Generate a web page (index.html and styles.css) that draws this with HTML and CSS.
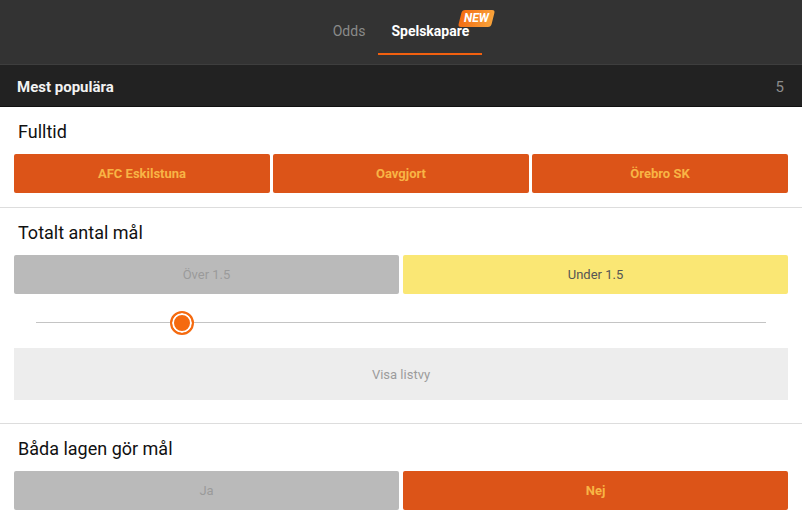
FILE: index.html
```html
<!DOCTYPE html>
<html lang="sv">
<head>
    <meta charset="UTF-8">
    <meta name="viewport" content="width=device-width, initial-scale=1.0">
    <title>Spelskapare</title>
    <link rel="stylesheet" href="styles.css">
</head>
<body>
    <div class="tabs">
        <div class="tab">Odds</div>
        <div class="tab active">Spelskapare<span class="badge-new"><span>NEW</span></span></div>
    </div>
    <div class="group-header">
        <span class="group-title">Mest populära</span>
        <span class="group-count">5</span>
    </div>

    <div class="market">
        <div class="market-title">Fulltid</div>
        <div class="options three">
            <div class="option selected">AFC Eskilstuna</div>
            <div class="option selected">Oavgjort</div>
            <div class="option selected">Örebro SK</div>
        </div>
    </div>

    <div class="market market-goals">
        <div class="market-title">Totalt antal mål</div>
        <div class="options two">
            <div class="option disabled">Över 1.5</div>
            <div class="option highlight">Under 1.5</div>
        </div>
        <div class="slider">
            <div class="slider-track"></div>
            <div class="slider-thumb" style="left: 20%"></div>
        </div>
        <div class="list-view">Visa listvy</div>
    </div>

    <div class="market">
        <div class="market-title">Båda lagen gör mål</div>
        <div class="options two">
            <div class="option disabled">Ja</div>
            <div class="option selected">Nej</div>
        </div>
    </div>
</body>
</html>
```

FILE: styles.css
```css
body {
    font-family: 'Roboto', 'Liberation Sans', sans-serif;
    background-color: #fff;
    margin: 0;
    padding: 0;
}
.tabs {
    height: 64px;
    background-color: #333;
    border-bottom: 1px solid #3e3e3e;
    display: flex;
    justify-content: center;
}
.tab {
    position: relative;
    padding: 0 13px;
    height: 53px;
    line-height: 62px;
    font-size: 14px;
    color: #8a8a8a;
    border-bottom: 2px solid transparent;
}
.tab.active {
    color: #fff;
    font-weight: bold;
    border-bottom-color: #f2600f;
}
.badge-new {
    position: absolute;
    top: 10px;
    right: -11px;
    width: 33px;
    height: 17px;
    background: linear-gradient(90deg, #f46d12, #f8a23a);
    border-radius: 3px;
    transform: skewX(-14deg);
    text-align: center;
    line-height: 17px;
}
.badge-new span {
    display: block;
    transform: skewX(14deg);
    font-size: 12px;
    font-style: italic;
    font-weight: bold;
    color: #fff;
}
.group-header {
    height: 42px;
    box-sizing: border-box;
    background-color: #222;
    border-bottom: 1px solid #111;
    display: flex;
    align-items: center;
    justify-content: space-between;
    padding: 2px 18px 0 17px;
}
.group-title {
    color: #f2f2f2;
    font-size: 15px;
    font-weight: bold;
}
.group-count {
    color: #8c8c8c;
    font-size: 15px;
}
.market {
    padding: 14px 14px 14px;
    border-bottom: 1px solid #ddd;
}
.market-goals {
    padding-bottom: 23px;
}
.market-title {
    font-size: 18px;
    line-height: 22px;
    color: #111;
    padding-left: 4px;
    margin-bottom: 11px;
}
.options {
    display: grid;
}
.options.three {
    grid-template-columns: 1fr 1fr 1fr;
    gap: 3px;
}
.options.two {
    grid-template-columns: 1fr 1fr;
    gap: 4px;
}
.option {
    height: 39px;
    line-height: 39px;
    text-align: center;
    font-size: 13px;
    border-radius: 2px;
}
.option.selected {
    background-color: #dc5418;
    color: #f8b445;
    font-weight: bold;
}
.option.disabled {
    background-color: #bababa;
    color: #9a9a9a;
}
.option.highlight {
    background-color: #fae774;
    color: #555;
}
.slider {
    position: relative;
    height: 54px;
    margin: 0 22px;
}
.slider-track {
    position: absolute;
    left: 0;
    right: 0;
    top: 28px;
    height: 1px;
    background-color: #c4c4c4;
}
.slider-thumb {
    position: absolute;
    top: 17px;
    width: 20px;
    height: 20px;
    margin-left: -12px;
    border: 2px solid #f56a0f;
    border-radius: 50%;
    background-color: #f56a0f;
    box-shadow: inset 0 0 0 2px #fff;
}
.list-view {
    height: 52px;
    line-height: 54px;
    background-color: #ededed;
    color: #9c9c9c;
    font-size: 13px;
    text-align: center;
}
```
